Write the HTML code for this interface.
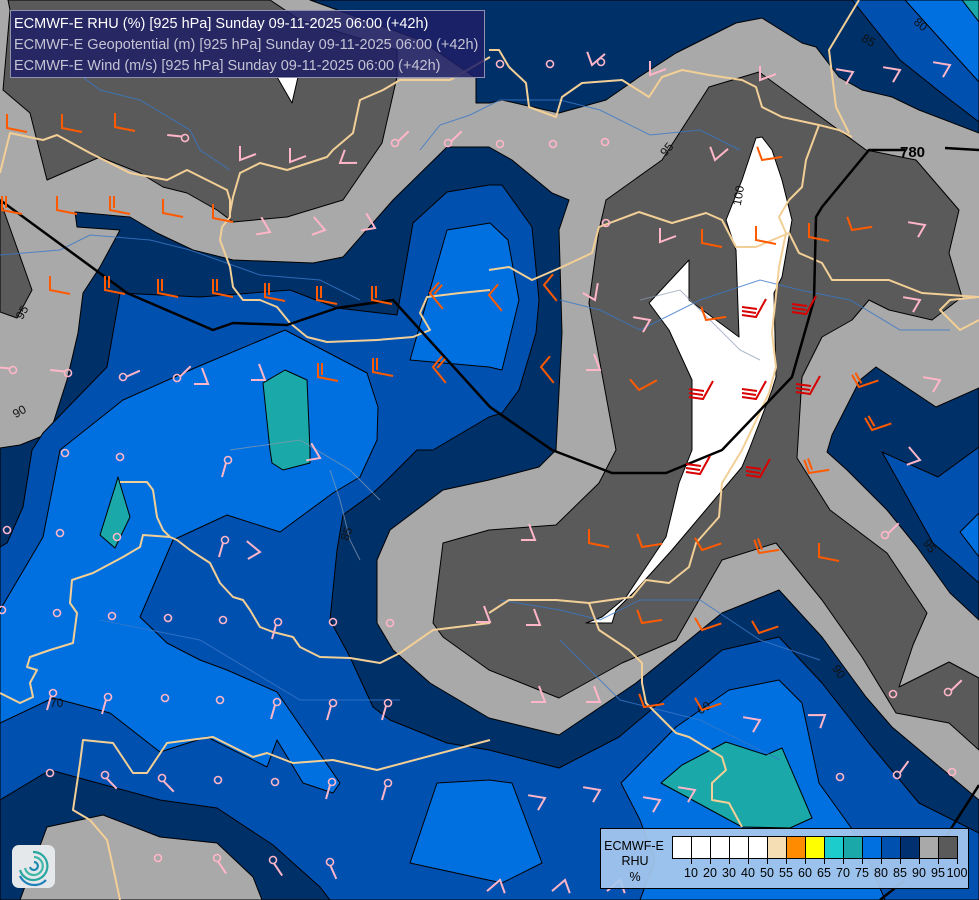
<!DOCTYPE html>
<html><head><meta charset="utf-8"><style>
html,body{margin:0;padding:0;background:#a9a9a9;}
svg{display:block;}
text{font-family:"Liberation Sans",sans-serif;}
</style></head><body>
<svg width="979" height="900" viewBox="0 0 979 900" xmlns="http://www.w3.org/2000/svg">
<defs>
<path id="bo" d="M0,-14 L0,0 L20,4" fill="none" stroke="#ff5a00" stroke-width="2"/>
<path id="bo2" d="M0,-14 L0,0 L20,4 M4,-14 L4,-2" fill="none" stroke="#ff5a00" stroke-width="2"/>
<path id="br" d="M14,-16 L4,2 L-10,0 M-10,-4 L4,-2 M-10,-8 L5,-6" fill="none" stroke="#d80000" stroke-width="2"/>
<path id="bp" d="M0,-14 L0,0 L16,-6" fill="none" stroke="#ffb6c8" stroke-width="2"/>
<g id="pc"><circle r="3.5" fill="none" stroke="#ffb6c8" stroke-width="1.6"/></g>
<g id="ps"><circle r="3.5" fill="none" stroke="#ffb6c8" stroke-width="1.6"/><path d="M-2,3 L-6,17" stroke="#ffb6c8" stroke-width="2"/></g>
</defs>
<rect width="979" height="900" fill="#a9a9a9"/>
<g stroke="#000" stroke-width="1" stroke-linejoin="round">
<!-- dark grey -->
<polygon fill="#5a5a5a" points="8,0 270,0 300,20 397,50 397,77 382,143 343,200 287,217 233,222 217,210 187,193 163,187 140,173 100,157 47,180 30,113 3,90 10,10"/>
<polygon fill="#5a5a5a" points="0,200 32,290 17,318 0,312"/>
<polygon fill="#5a5a5a" points="616,450 589,303 599,230 606,200 662,160 709,87 759,72 862,147 866,150 916,160 959,210 949,253 962,297 932,320 889,310 869,300 852,320 822,337 802,377 797,458 830,510 887,553 927,613 913,645 899,687 949,662 979,678 979,750 949,723 896,713 862,657 822,600 776,543 722,560 676,640 622,663 559,698 489,670 443,637 433,623 443,543 489,530 556,525 599,483"/>
<!-- white -->
<polygon fill="#fff" points="277,77 298,77 292,103"/>
<polygon fill="#fff" points="756,138 742,180 726,220 736,250 739,337 689,300 689,260 649,303 669,330 692,380 692,450 679,483 666,537 626,597 602,617 586,623 612,623 616,610 636,590 672,550 742,467 749,450 772,390 776,377 774,293 782,277 792,220 782,180 772,150 762,137"/>
<!-- navy -->
<polygon fill="#003068" points="310,0 979,0 979,133 919,110 892,97 862,90 839,77 816,47 802,43 762,18 736,23 676,53 639,77 606,100 559,113 502,100 490,103 476,103 476,78 420,40"/>
<polygon fill="#003068" points="0,448 20,445 50,433 67,380 78,333 83,293 100,267 120,230 77,227 75,212 130,217 157,233 193,250 233,260 313,263 343,257 393,200 447,147 489,147 512,160 552,193 569,200 559,230 562,333 556,450 539,467 489,480 443,490 390,530 377,560 377,623 393,650 430,683 489,718 559,735 636,683 722,613 779,590 822,637 866,697 892,727 979,800 979,900 0,900"/>
<polygon fill="#003068" points="876,367 936,407 979,388 979,620 950,593 917,547 887,510 847,470 827,452 832,435 860,380"/>
<polygon fill="#a9a9a9" points="20,900 47,827 103,815 160,837 217,843 253,877 262,900"/>
<!-- blue 80 -->
<polygon fill="#0050b0" points="43,433 107,367 120,293 200,297 290,290 337,308 397,315 413,223 447,192 489,185 502,185 532,227 539,300 536,333 519,390 502,413 489,417 433,450 417,450 387,480 373,493 343,515 337,550 330,620 350,657 373,707 390,720 447,743 489,750 559,768 619,737 722,650 779,637 822,683 869,743 919,803 979,833 979,900 330,900 320,887 273,845 217,808 160,800 50,770 0,800 0,547 7,543 23,507 32,450"/>
<polygon fill="#0050b0" points="852,0 979,0 979,122 940,92 900,60"/>
<polygon fill="#0050b0" points="882,452 938,477 979,447 979,583 953,560 933,543 920,520"/>
<!-- blue 75 -->
<polygon fill="#0070e0" points="60,450 123,400 197,367 285,330 367,373 378,407 377,440 360,477 333,493 280,532 227,515 173,540 140,617 167,643 200,660 227,670 277,692 340,783 333,793 303,783 277,740 267,767 207,737 160,752 110,713 53,698 0,723 0,610 43,537"/>
<polygon fill="#0070e0" points="447,230 490,223 508,240 519,300 502,370 489,367 410,360"/>
<polygon fill="#0070e0" points="621,783 676,727 729,690 779,680 802,703 819,783 860,840 885,900 640,900 655,860 640,820"/>
<polygon fill="#0070e0" points="437,783 489,780 512,783 542,863 502,883 410,863"/>
<polygon fill="#0070e0" points="905,0 979,0 979,82 950,50"/>
<polygon fill="#0070e0" points="960,532 979,513 979,557"/>
<!-- teal -->
<polygon fill="#1aa8a8" points="263,383 285,370 307,380 310,450 310,463 283,470 272,463 270,450"/>
<polygon fill="#1aa8a8" points="118,477 130,517 115,548 100,535 115,487"/>
<polygon fill="#1aa8a8" points="661,783 682,765 726,742 766,755 782,748 812,818 790,828 742,827"/>
<polygon fill="#1aa8a8" points="962,0 979,0 979,22"/>
</g>
<!-- rivers -->
<g fill="none" stroke="#3a78c8" stroke-width="1" opacity="0.8">
<path d="M30,20 L60,60 L100,90 L140,100 L190,130 L200,150 L230,170"/>
<path d="M0,255 L60,250 L90,235 L150,240 L190,250 L260,275 L320,280 L360,300"/>
<path d="M420,150 L440,125 L470,115 L500,100 L560,100 L600,110 L650,135 L700,130 L740,150"/>
<path d="M560,300 L600,310 L640,330 L700,300 L760,280 L800,290 L850,300 L900,330 L950,330"/>
<path d="M500,600 L560,610 L600,620 L640,600 L700,600 L760,640 L820,660"/>
<path d="M560,640 L620,700 L700,720 L780,760"/>
<path d="M100,620 L200,640 L300,700 L400,700"/>
</g>
<g fill="none" stroke="#8a9ab0" stroke-width="1" opacity="0.7">
<path d="M640,300 L680,290 L720,330 L740,350 L760,360"/>
<path d="M330,470 L340,500 L350,540 L360,560"/>
<path d="M230,450 L300,440 L350,470 L380,500"/>
</g>
<!-- borders -->
<g fill="none" stroke="#f2cf96" stroke-width="2" stroke-linejoin="round">
<path d="M0,173 L10,133 L43,140 L57,135 L90,153 L130,173 L167,180 L187,170 L213,183 L227,190 L230,200 L230,217 L222,227 L220,240 L230,267 L233,287 L243,300 L260,300 L277,307 L290,323 L307,337 L327,342 L377,340 L413,337 L430,330 L420,313 L427,297 L460,293 L490,290"/>
<path d="M489,270 L509,267 L532,280 L562,267 L592,253 L599,227 L639,212 L672,223 L706,213 L722,220 L736,247 L756,247 L789,233 L799,253 L822,263 L832,280 L856,280 L889,280 L922,293 L979,297"/>
<path d="M489,50 L499,50 L509,67 L526,83 L529,107 L556,117 L562,97 L582,83 L622,80 L649,97 L662,77 L682,70 L709,75 L742,80 L756,87 L762,107 L782,117 L819,125 L839,130 L852,137"/>
<path d="M859,0 L829,50 L836,107 L849,133"/>
<path d="M490,57 L450,80 L400,80 L383,90 L360,100 L353,133 L333,150 L327,157 L287,170 L260,163 L240,173 L233,197 L230,213"/>
<path d="M819,125 L806,160 L802,187 L789,200 L779,217 L786,233 L779,267 L772,333 L776,367 L769,393 L742,450 L722,483 L719,517 L696,543 L689,567 L669,583 L646,580 L632,597 L589,603 L556,600 L509,600 L489,613"/>
<path d="M589,603 L599,630 L629,650 L642,663 L642,683 L646,703 L656,713 L676,733 L689,737 L722,757 L726,770 L712,783 L712,800 L729,803 L742,827"/>
<path d="M490,623 L433,630 L400,653 L380,663 L350,658 L320,657 L300,647 L293,637 L273,632 L260,627 L250,610 L243,600 L233,597 L220,583 L210,563 L190,550 L177,540 L170,537 L163,530 L157,517 L153,490 L147,482 L120,482"/>
<path d="M170,537 L143,535 L140,547 L123,557 L93,573 L72,580 L70,603 L77,613 L73,643 L50,650 L30,657 L27,667 L37,670 L30,683 L33,697 L20,703 L0,693"/>
<path d="M490,740 L377,770 L333,760 L293,763 L267,753 L253,757 L213,737 L167,743 L147,773 L133,773 L113,743 L83,740 L80,763 L73,810 L90,820 L107,840 L113,867 L120,900"/>
<path d="M979,297 L950,300 L940,310 L960,330 L979,320"/>
</g>
<!-- geopotential line -->
<g fill="none" stroke="#000" stroke-width="2.5" stroke-linejoin="round">
<path d="M0,200 L127,293 L213,330 L233,323 L287,325 L337,308 L393,300 L490,407 L552,450 L612,473 L666,473 L722,450 L792,377 L814,300 L816,217 L822,207 L869,150 L905,150"/>
<path d="M945,148 L979,150"/>
<path d="M979,785 L945,838"/>
<path d="M880,900 L905,880"/>
</g>
<text x="900" y="157" font-size="15" font-weight="bold" fill="#000">780</text>
<!-- contour labels -->
<g font-size="12" fill="#111">
<text x="14" y="318" transform="rotate(-60 20 312)">95</text>
<text x="12" y="415" transform="rotate(-30 20 410)">90</text>
<text x="728" y="205" transform="rotate(-80 735 198)">100</text>
<text x="660" y="155" transform="rotate(-50 665 150)">95</text>
<text x="862" y="44" transform="rotate(30 868 40)">85</text>
<text x="914" y="28" transform="rotate(40 920 24)">80</text>
<text x="696" y="712" transform="rotate(-30 703 706)">60</text>
<text x="834" y="676" transform="rotate(55 840 670)">90</text>
<text x="924" y="550" transform="rotate(55 930 545)">95</text>
<text x="50" y="707">70</text>
<text x="340" y="540" transform="rotate(-70 345 535)">85</text>
</g>
<!-- orange barbs -->
<g>
<use href="#bo" x="7" y="128"/><use href="#bo" x="62" y="128"/><use href="#bo" x="115" y="127"/>
<use href="#bo2" x="2" y="210"/><use href="#bo" x="57" y="210"/><use href="#bo2" x="110" y="210"/><use href="#bo" x="163" y="213"/><use href="#bo" x="213" y="218"/>
<use href="#bo" x="50" y="290"/><use href="#bo2" x="105" y="290"/><use href="#bo2" x="158" y="293"/><use href="#bo2" x="213" y="293"/><use href="#bo2" x="265" y="297"/><use href="#bo2" x="317" y="300"/><use href="#bo2" x="372" y="300"/>
<use href="#bo2" x="318" y="377"/><use href="#bo2" x="373" y="372"/>
<use href="#bo2" x="430" y="293" transform="rotate(40 430 293)"/><use href="#bo2" x="433" y="367" transform="rotate(40 433 367)"/>
<use href="#bo" x="489" y="295" transform="rotate(40 489 295)"/><use href="#bo" x="541" y="367" transform="rotate(40 541 367)"/><use href="#bo" x="544" y="285" transform="rotate(40 544 285)"/>
<use href="#bo" x="702" y="243"/><use href="#bo" x="756" y="240"/><use href="#bo" x="762" y="160" transform="rotate(-20 762 160)"/><use href="#bo" x="809" y="237"/><use href="#bo" x="852" y="230" transform="rotate(-20 852 230)"/>
<use href="#bo2" x="859" y="387" transform="rotate(-30 859 387)"/><use href="#bo" x="706" y="320" transform="rotate(-20 706 320)"/><use href="#bo" x="639" y="390" transform="rotate(-40 639 390)"/>
<use href="#bo" x="589" y="543"/><use href="#bo" x="642" y="547" transform="rotate(-20 642 547)"/><use href="#bo" x="702" y="550" transform="rotate(-30 702 550)"/><use href="#bo2" x="759" y="553" transform="rotate(-20 759 553)"/><use href="#bo" x="819" y="557"/>
<use href="#bo" x="642" y="623" transform="rotate(-20 642 623)"/><use href="#bo" x="702" y="630" transform="rotate(-30 702 630)"/><use href="#bo" x="759" y="633" transform="rotate(-30 759 633)"/>
<use href="#bo" x="644" y="707" transform="rotate(-20 644 707)"/><use href="#bo" x="702" y="710" transform="rotate(-30 702 710)"/><use href="#bo2" x="809" y="473" transform="rotate(-20 809 473)"/><use href="#bo2" x="872" y="430" transform="rotate(-30 872 430)"/>
<use href="#br" x="802" y="312"/><use href="#br" x="752" y="315"/><use href="#br" x="699" y="397"/><use href="#br" x="752" y="397"/><use href="#br" x="806" y="392"/><use href="#br" x="696" y="472"/><use href="#br" x="756" y="475"/>
</g>
<!-- pink barbs -->
<g>
<use href="#pc" x="120" y="457"/><use href="#pc" x="65" y="453"/><use href="#pc" x="7" y="530"/><use href="#pc" x="60" y="533"/><use href="#pc" x="117" y="537"/><use href="#pc" x="57" y="613"/><use href="#pc" x="112" y="616"/><use href="#pc" x="168" y="618"/><use href="#pc" x="223" y="620"/><use href="#pc" x="333" y="622"/><use href="#pc" x="390" y="623"/><use href="#pc" x="165" y="698"/><use href="#pc" x="220" y="700"/><use href="#pc" x="50" y="773"/><use href="#pc" x="218" y="780"/><use href="#pc" x="275" y="782"/><use href="#pc" x="158" y="858"/><use href="#pc" x="2" y="610"/>
<use href="#pc" x="500" y="64"/><use href="#pc" x="550" y="64"/><use href="#pc" x="601" y="62"/><use href="#pc" x="500" y="144"/><use href="#pc" x="553" y="144"/><use href="#pc" x="605" y="142"/><use href="#pc" x="606" y="223"/><use href="#pc" x="840" y="777"/><use href="#pc" x="952" y="772"/><use href="#pc" x="893" y="694"/>
<use href="#ps" x="228" y="460"/><use href="#ps" x="225" y="540"/><use href="#ps" x="278" y="622"/><use href="#ps" x="277" y="702"/><use href="#ps" x="333" y="703"/><use href="#ps" x="388" y="703"/><use href="#ps" x="53" y="693"/><use href="#ps" x="108" y="697"/><use href="#ps" x="105" y="775" transform="rotate(-60 105 775)"/><use href="#ps" x="162" y="778" transform="rotate(-60 162 778)"/><use href="#ps" x="332" y="782"/><use href="#ps" x="388" y="783"/><use href="#ps" x="273" y="860" transform="rotate(-50 273 860)"/><use href="#ps" x="330" y="862" transform="rotate(-40 330 862)"/><use href="#ps" x="217" y="858" transform="rotate(-50 217 858)"/>
<use href="#ps" x="185" y="138" transform="rotate(80 185 138)"/><use href="#ps" x="395" y="143" transform="rotate(-150 395 143)"/><use href="#ps" x="448" y="143" transform="rotate(-150 448 143)"/><use href="#ps" x="123" y="377" transform="rotate(-130 123 377)"/><use href="#ps" x="177" y="378" transform="rotate(-150 177 378)"/><use href="#ps" x="68" y="373" transform="rotate(80 68 373)"/><use href="#ps" x="13" y="370" transform="rotate(80 13 370)"/>
<use href="#ps" x="885" y="535" transform="rotate(-150 885 535)"/><use href="#ps" x="948" y="692" transform="rotate(-150 948 692)"/><use href="#ps" x="897" y="775" transform="rotate(-160 897 775)"/>
<use href="#bp" x="240" y="160"/><use href="#bp" x="290" y="162"/><use href="#bp" x="340" y="163" transform="rotate(20 340 163)"/><use href="#bp" x="270" y="232" transform="rotate(-100 270 232)"/><use href="#bp" x="325" y="230" transform="rotate(-110 325 230)"/><use href="#bp" x="375" y="228" transform="rotate(-100 375 228)"/>
<use href="#bp" x="208" y="384" transform="rotate(-90 208 384)"/><use href="#bp" x="265" y="380" transform="rotate(-90 265 380)"/><use href="#bp" x="320" y="458" transform="rotate(-100 320 458)"/><use href="#bp" x="260" y="552" transform="rotate(-120 260 552)"/>
<use href="#bp" x="592" y="65" transform="rotate(-20 592 65)"/><use href="#bp" x="650" y="75"/><use href="#bp" x="760" y="80"/><use href="#bp" x="715" y="160" transform="rotate(-20 715 160)"/><use href="#bp" x="660" y="242"/><use href="#bp" x="595" y="300" transform="rotate(-60 595 300)"/><use href="#bp" x="600" y="370" transform="rotate(-90 600 370)"/><use href="#bp" x="650" y="320" transform="rotate(-150 650 320)"/>
<use href="#bp" x="853" y="72" transform="rotate(-150 853 72)"/><use href="#bp" x="900" y="70" transform="rotate(-150 900 70)"/><use href="#bp" x="950" y="65" transform="rotate(-150 950 65)"/><use href="#bp" x="925" y="225" transform="rotate(-150 925 225)"/><use href="#bp" x="920" y="300" transform="rotate(-150 920 300)"/><use href="#bp" x="940" y="380" transform="rotate(-150 940 380)"/><use href="#bp" x="920" y="460" transform="rotate(-110 920 460)"/>
<use href="#bp" x="535" y="540" transform="rotate(-90 535 540)"/><use href="#bp" x="540" y="625" transform="rotate(-90 540 625)"/><use href="#bp" x="545" y="702" transform="rotate(-90 545 702)"/><use href="#bp" x="600" y="702" transform="rotate(-90 600 702)"/><use href="#bp" x="490" y="622" transform="rotate(-90 490 622)"/>
<use href="#bp" x="760" y="720" transform="rotate(-150 760 720)"/><use href="#bp" x="825" y="715" transform="rotate(-160 825 715)"/><use href="#bp" x="695" y="790" transform="rotate(-150 695 790)"/><use href="#bp" x="660" y="800" transform="rotate(-150 660 800)"/><use href="#bp" x="545" y="798" transform="rotate(-150 545 798)"/><use href="#bp" x="600" y="790" transform="rotate(-150 600 790)"/>
<use href="#bp" x="500" y="880" transform="rotate(160 500 880)"/><use href="#bp" x="565" y="880" transform="rotate(160 565 880)"/><use href="#bp" x="620" y="880" transform="rotate(160 620 880)"/>
</g>
<!-- header -->
<rect x="10.5" y="10.5" width="474" height="67" fill="#1e1e66" fill-opacity="0.85" stroke="#9090b0" stroke-width="1"/>
<text x="14" y="28" font-size="14.5" fill="#ffffff">ECMWF-E RHU (%) [925 hPa] Sunday 09-11-2025 06:00 (+42h)</text>
<text x="14" y="49" font-size="14.5" fill="#c4c4d4">ECMWF-E Geopotential (m) [925 hPa] Sunday 09-11-2025 06:00 (+42h)</text>
<text x="14" y="70" font-size="14.5" fill="#c4c4d4">ECMWF-E Wind (m/s) [925 hPa] Sunday 09-11-2025 06:00 (+42h)</text>
<!-- logo -->
<rect x="12" y="845" width="43" height="43" rx="7" fill="#e4e8ea"/>
<g fill="none" stroke-width="2.2">
<path d="M33,852 A14,14 0 1 1 20,870" stroke="#2aa6a0"/>
<path d="M34,857 A9,9 0 1 1 25,868" stroke="#3fb8a8"/>
<path d="M34,862 A4,4 0 1 1 30,867" stroke="#1f88b0"/>
<path d="M20,876 A16,16 0 0 0 46,880" stroke="#1f7fb8"/>
</g>
<!-- legend -->
<rect x="600.5" y="828.5" width="368" height="60" fill="#a6c8ee" fill-opacity="0.93" stroke="#000"/>
<g font-size="12.5" fill="#000" text-anchor="middle">
<text x="634" y="850">ECMWF-E</text>
<text x="635" y="865">RHU</text>
<text x="635" y="881">%</text>
</g>
<g stroke="#000" stroke-width="1">
<rect x="672.5" y="836.5" width="19" height="22" fill="#fff"/>
<rect x="691.5" y="836.5" width="19" height="22" fill="#fff"/>
<rect x="710.5" y="836.5" width="19" height="22" fill="#fff"/>
<rect x="729.5" y="836.5" width="19" height="22" fill="#fff"/>
<rect x="748.5" y="836.5" width="19" height="22" fill="#fff"/>
<rect x="767.5" y="836.5" width="19" height="22" fill="#f5deb3"/>
<rect x="786.5" y="836.5" width="19" height="22" fill="#ff8c00"/>
<rect x="805.5" y="836.5" width="19" height="22" fill="#ffff00"/>
<rect x="824.5" y="836.5" width="19" height="22" fill="#1ccccc"/>
<rect x="843.5" y="836.5" width="19" height="22" fill="#1aa8a8"/>
<rect x="862.5" y="836.5" width="19" height="22" fill="#0070e0"/>
<rect x="881.5" y="836.5" width="19" height="22" fill="#0050b0"/>
<rect x="900.5" y="836.5" width="19" height="22" fill="#003070"/>
<rect x="919.5" y="836.5" width="19" height="22" fill="#a9a9a9"/>
<rect x="938.5" y="836.5" width="19" height="22" fill="#5a5a5a"/>
<path d="M691.5,858 v6 M710.5,858 v6 M729.5,858 v6 M748.5,858 v6 M767.5,858 v6 M786.5,858 v6 M805.5,858 v6 M824.5,858 v6 M843.5,858 v6 M862.5,858 v6 M881.5,858 v6 M900.5,858 v6 M919.5,858 v6 M938.5,858 v6 M957.5,858 v6"/>
</g>
<g font-size="12.5" fill="#000" text-anchor="middle">
<text x="691" y="877">10</text><text x="710" y="877">20</text><text x="729" y="877">30</text><text x="748" y="877">40</text><text x="767" y="877">50</text><text x="786" y="877">55</text><text x="805" y="877">60</text><text x="824" y="877">65</text><text x="843" y="877">70</text><text x="862" y="877">75</text><text x="881" y="877">80</text><text x="900" y="877">85</text><text x="919" y="877">90</text><text x="938" y="877">95</text><text x="957" y="877">100</text>
</g>
</svg>
</body></html>
